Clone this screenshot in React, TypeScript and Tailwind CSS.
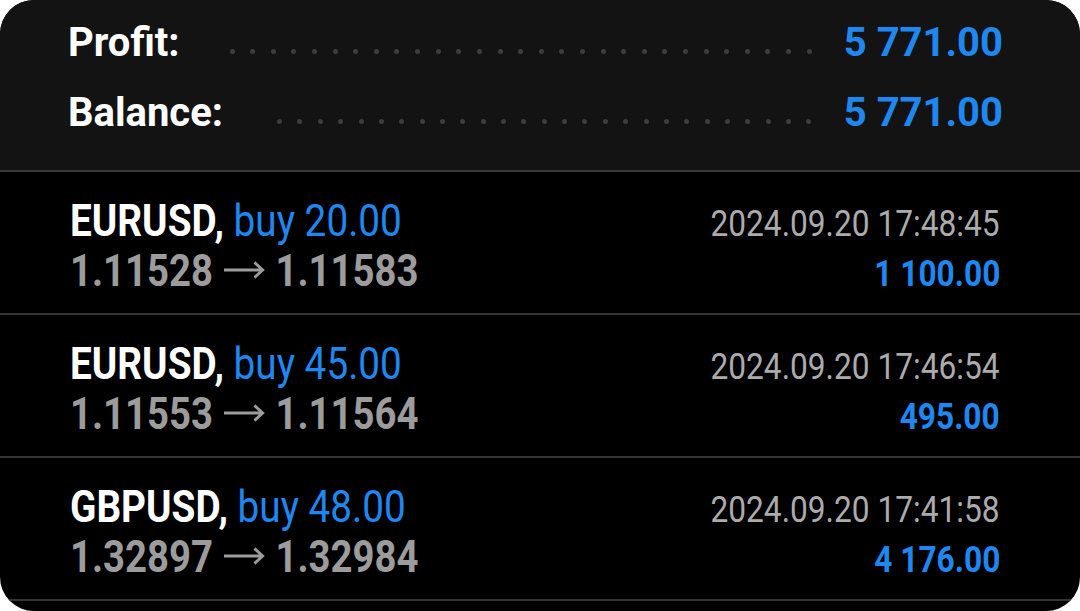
import React from "react";

interface Trade {
  symbol: string;
  volume: string;
  open: string;
  close: string;
  time: string;
  profit: string;
}

const trades: Trade[] = [
  { symbol: "EURUSD", volume: "20.00", open: "1.11528", close: "1.11583", time: "2024.09.20 17:48:45", profit: "1 100.00" },
  { symbol: "EURUSD", volume: "45.00", open: "1.11553", close: "1.11564", time: "2024.09.20 17:46:54", profit: "495.00" },
  { symbol: "GBPUSD", volume: "48.00", open: "1.32897", close: "1.32984", time: "2024.09.20 17:41:58", profit: "4 176.00" },
];

const Dots = ({ count, className }: { count: number; className: string }) => (
  <div className={`flex justify-between ${className}`}>
    {Array.from({ length: count }).map((_, i) => (
      <span key={i} className="w-[5px] h-[5px] rounded-full bg-[#3d3d3d]" />
    ))}
  </div>
);

const SummaryRow = ({ label, value, dots, dotsClass }: { label: string; value: string; dots: number; dotsClass: string }) => (
  <div className="flex items-center h-[70px] pl-[68px] pr-[77px]">
    <span className="text-[40px] leading-none font-bold text-white">{label}</span>
    <Dots count={dots} className={`flex-1 mt-[16px] ${dotsClass}`} />
    <span className="text-[40px] leading-none font-bold text-[#1e88f0]">{value}</span>
  </div>
);

const Arrow = () => (
  <svg width="48" height="20" viewBox="0 0 48 20" className="inline-block mx-[12px] align-[6px]">
    <path d="M1 10H45M36 2.5L45.5 10L36 17.5" fill="none" stroke="#9c9c9c" strokeWidth="3" />
  </svg>
);

export default function App() {
  return (
    <div className="w-[1080px] h-[611px] bg-white" style={{ fontFamily: "Roboto, 'Noto Sans', sans-serif" }}>
      <div className="h-full rounded-[34px] overflow-hidden bg-black">
        <div className="h-[172px] pt-[8px] bg-[#131313] border-b-2 border-[#3a3a3a]">
          <SummaryRow label="Profit:" value="5 771.00" dots={29} dotsClass="ml-[50px] mr-[32px]" />
          <SummaryRow label="Balance:" value="5 771.00" dots={27} dotsClass="ml-[54px] mr-[32px]" />
        </div>

        {trades.map((t, i) => (
          <div key={i} className="h-[143px] pt-[24px] pl-[70px] pr-[80px] border-b-2 border-[#353535]">
            <div className="flex items-baseline justify-between h-[50px] leading-[50px]">
              <span className="inline-block origin-left scale-x-[0.88] text-[44px] whitespace-nowrap">
                <span className="font-bold text-white">{t.symbol},</span>{" "}
                <span className="text-[#1e88f0]">buy {t.volume}</span>
              </span>
              <span className="inline-block origin-right scale-x-[0.88] text-[36px] text-[#ababab] whitespace-nowrap">
                {t.time}
              </span>
            </div>
            <div className="flex items-baseline justify-between h-[50px] leading-[50px]">
              <span className="inline-block origin-left scale-x-[0.87] text-[44px] font-bold text-[#9c9c9c] whitespace-nowrap">
                {t.open}
                <Arrow />
                {t.close}
              </span>
              <span className="inline-block origin-right scale-x-[0.88] text-[36px] font-bold text-[#1e88f0] whitespace-nowrap">
                {t.profit}
              </span>
            </div>
          </div>
        ))}
      </div>
    </div>
  );
}
